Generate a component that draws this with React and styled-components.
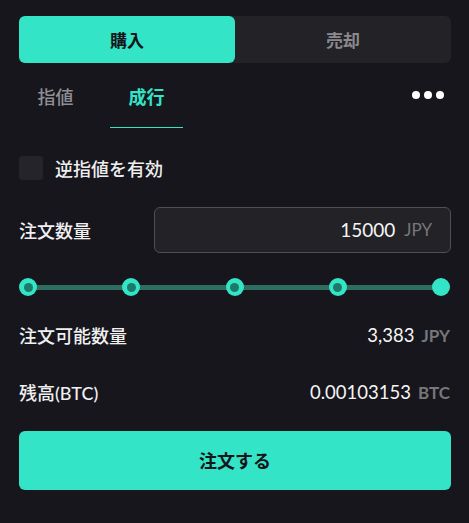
import React from "react";
import styled, { createGlobalStyle } from "styled-components";

const GlobalStyle = createGlobalStyle`
  html, body {
    margin: 0;
    padding: 0;
    background: #16161c;
  }
  body {
    font-family: Lato, "Noto Sans CJK JP", sans-serif;
    color: #f2f2f2;
  }
`;

const TEAL = "#34e4c7";

const Panel = styled.div`
  width: 469px;
  height: 523px;
  box-sizing: border-box;
  padding: 16px 18px 0 19px;
  background: #16161c;
`;

const SideTabs = styled.div`
  display: grid;
  grid-template-columns: 1fr 1fr;
  height: 47px;
  border-radius: 6px;
  background: #222227;
`;

const SideTab = styled.div`
  display: flex;
  align-items: center;
  justify-content: center;
  border-radius: 6px;
  font-size: 17px;
  font-weight: 700;
  background: ${(p) => (p.$active ? TEAL : "transparent")};
  color: ${(p) => (p.$active ? "#15151a" : "#8a8a8e")};
`;

const TypeRow = styled.div`
  display: flex;
  align-items: stretch;
  height: 65px;
`;

const TypeTab = styled.div`
  width: 73px;
  display: flex;
  align-items: center;
  justify-content: center;
  margin-right: 18px;
  padding-top: 2px;
  box-sizing: border-box;
  font-size: 18px;
  font-weight: ${(p) => (p.$active ? 700 : 500)};
  color: ${(p) => (p.$active ? TEAL : "#8f8f93")};
  border-bottom: 1.5px solid ${(p) => (p.$active ? TEAL : "transparent")};
`;

const More = styled.div`
  margin-left: auto;
  display: flex;
  align-items: center;
  gap: 4px;
  padding-right: 7px;
  padding-bottom: 1px;
`;

const Dot = styled.span`
  width: 8px;
  height: 8px;
  border-radius: 50%;
  background: #ffffff;
`;

const CheckRow = styled.label`
  display: flex;
  align-items: center;
  gap: 12px;
  margin-top: 27px;
  font-size: 18px;
  font-weight: 500;
  color: #eeeeee;
`;

const Box = styled.span`
  width: 24px;
  height: 24px;
  border-radius: 3px;
  background: #242429;
`;

const QtyRow = styled.div`
  display: flex;
  align-items: center;
  justify-content: space-between;
  margin-top: 26px;
`;

const Label = styled.div`
  font-size: 18px;
  font-weight: 500;
  color: #f0f0f0;
`;

const Input = styled.div`
  width: 297px;
  height: 46px;
  box-sizing: border-box;
  border: 1px solid #4e4e54;
  border-radius: 6px;
  background: #222227;
  display: flex;
  align-items: center;
  justify-content: flex-end;
  padding: 0 18px 2px 0;
  gap: 9px;
`;

const Amount = styled.span`
  font-size: 19px;
  color: #f5f5f5;
`;

const Unit = styled.span`
  font-size: 17px;
  font-weight: ${(p) => (p.$bold ? 700 : 400)};
  color: #77777b;
`;

const Slider = styled.div`
  position: relative;
  display: flex;
  justify-content: space-between;
  align-items: center;
  margin-top: 25px;
  height: 18px;
  margin-right: 1px;
`;

const Track = styled.div`
  position: absolute;
  left: 9px;
  right: 9px;
  top: 7px;
  height: 5px;
  background: #2e6e60;
`;

const Knob = styled.span`
  position: relative;
  width: 18px;
  height: 18px;
  border-radius: 50%;
  background: ${TEAL};
  display: flex;
  align-items: center;
  justify-content: center;
  &::after {
    content: "";
    display: ${(p) => (p.$filled ? "none" : "block")};
    width: 9px;
    height: 9px;
    border-radius: 50%;
    background: #1d7a68;
  }
`;

const InfoRow = styled.div`
  display: flex;
  align-items: center;
  justify-content: space-between;
  margin-top: ${(p) => p.$top}px;
  padding-right: 1px;
`;

const Value = styled.div`
  display: flex;
  align-items: baseline;
  gap: 7px;
  font-size: 18.5px;
  color: #f5f5f5;
`;

const OrderButton = styled.button`
  display: block;
  width: 100%;
  height: 59px;
  margin-top: 26px;
  border: none;
  border-radius: 6px;
  background: ${TEAL};
  font-family: inherit;
  font-size: 18px;
  font-weight: 700;
  color: #15151a;
  padding: 0 0 2px;
`;

export default function App() {
  return (
    <Panel>
      <GlobalStyle />
      <SideTabs>
        <SideTab $active>購入</SideTab>
        <SideTab>売却</SideTab>
      </SideTabs>
      <TypeRow>
        <TypeTab>指値</TypeTab>
        <TypeTab $active>成行</TypeTab>
        <More>
          <Dot />
          <Dot />
          <Dot />
        </More>
      </TypeRow>
      <CheckRow>
        <Box />
        逆指値を有効
      </CheckRow>
      <QtyRow>
        <Label>注文数量</Label>
        <Input>
          <Amount>15000</Amount>
          <Unit>JPY</Unit>
        </Input>
      </QtyRow>
      <Slider>
        <Track />
        <Knob />
        <Knob />
        <Knob />
        <Knob />
        <Knob $filled />
      </Slider>
      <InfoRow $top={26}>
        <Label>注文可能数量</Label>
        <Value>
          3,383 <Unit $bold>JPY</Unit>
        </Value>
      </InfoRow>
      <InfoRow $top={31}>
        <Label>残高(BTC)</Label>
        <Value>
          0.00103153 <Unit $bold>BTC</Unit>
        </Value>
      </InfoRow>
      <OrderButton>注文する</OrderButton>
    </Panel>
  );
}
